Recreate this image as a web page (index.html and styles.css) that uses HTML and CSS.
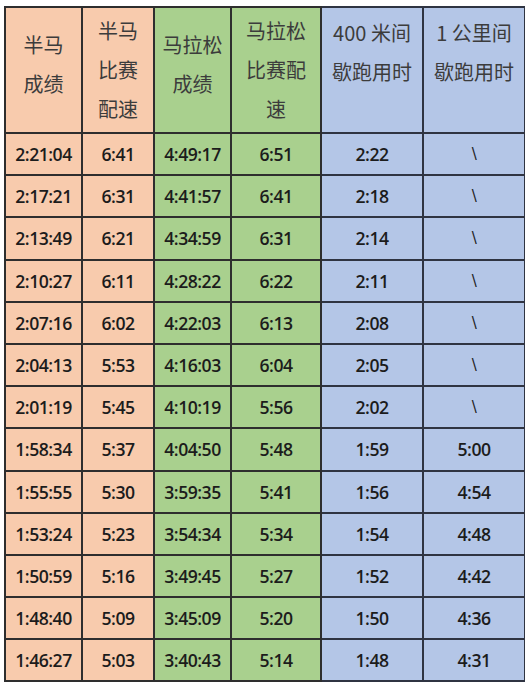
FILE: index.html
```html
<!DOCTYPE html>
<html lang="zh">
<head>
<meta charset="utf-8">
<link rel="stylesheet" href="styles.css">
</head>
<body>
<div class="page">
<table class="pace">
<colgroup>
<col class="c1"><col class="c2"><col class="c3"><col class="c4"><col class="c5"><col class="c6">
</colgroup>
<thead>
<tr class="head">
<th class="o h-mid">半马<br>成绩</th>
<th class="o h-top">半马<br>比赛<br>配速</th>
<th class="g h-mid">马拉松<br>成绩</th>
<th class="g h-top">马拉松<br>比赛配<br>速</th>
<th class="b h-two">400 米间<br>歇跑用时</th>
<th class="b h-two">1 公里间<br>歇跑用时</th>
</tr>
</thead>
<tbody>
<tr><td class="o">2:21:04</td><td class="o">6:41</td><td class="g">4:49:17</td><td class="g">6:51</td><td class="b">2:22</td><td class="b slash">\</td></tr>
<tr><td class="o">2:17:21</td><td class="o">6:31</td><td class="g">4:41:57</td><td class="g">6:41</td><td class="b">2:18</td><td class="b slash">\</td></tr>
<tr><td class="o">2:13:49</td><td class="o">6:21</td><td class="g">4:34:59</td><td class="g">6:31</td><td class="b">2:14</td><td class="b slash">\</td></tr>
<tr><td class="o">2:10:27</td><td class="o">6:11</td><td class="g">4:28:22</td><td class="g">6:22</td><td class="b">2:11</td><td class="b slash">\</td></tr>
<tr><td class="o">2:07:16</td><td class="o">6:02</td><td class="g">4:22:03</td><td class="g">6:13</td><td class="b">2:08</td><td class="b slash">\</td></tr>
<tr><td class="o">2:04:13</td><td class="o">5:53</td><td class="g">4:16:03</td><td class="g">6:04</td><td class="b">2:05</td><td class="b slash">\</td></tr>
<tr><td class="o">2:01:19</td><td class="o">5:45</td><td class="g">4:10:19</td><td class="g">5:56</td><td class="b">2:02</td><td class="b slash">\</td></tr>
<tr><td class="o">1:58:34</td><td class="o">5:37</td><td class="g">4:04:50</td><td class="g">5:48</td><td class="b">1:59</td><td class="b">5:00</td></tr>
<tr><td class="o">1:55:55</td><td class="o">5:30</td><td class="g">3:59:35</td><td class="g">5:41</td><td class="b">1:56</td><td class="b">4:54</td></tr>
<tr><td class="o">1:53:24</td><td class="o">5:23</td><td class="g">3:54:34</td><td class="g">5:34</td><td class="b">1:54</td><td class="b">4:48</td></tr>
<tr><td class="o">1:50:59</td><td class="o">5:16</td><td class="g">3:49:45</td><td class="g">5:27</td><td class="b">1:52</td><td class="b">4:42</td></tr>
<tr><td class="o">1:48:40</td><td class="o">5:09</td><td class="g">3:45:09</td><td class="g">5:20</td><td class="b">1:50</td><td class="b">4:36</td></tr>
<tr><td class="o">1:46:27</td><td class="o">5:03</td><td class="g">3:40:43</td><td class="g">5:14</td><td class="b">1:48</td><td class="b">4:31</td></tr>
</tbody>
</table>
</div>
</body>
</html>
```
FILE: styles.css
```css
html, body {
  margin: 0;
  padding: 0;
  background: #ffffff;
}

.page {
  padding: 6px 0 0 4px;
}

.pace {
  border-collapse: collapse;
  table-layout: fixed;
  width: 520px;
}

.c1 { width: 77px; }
.c2 { width: 72px; }
.c3 { width: 77px; }
.c4 { width: 90px; }
.c5 { width: 102px; }
.c6 { width: 102px; }

.pace th,
.pace td {
  border: 2px solid #2e2e2e;
  text-align: center;
  padding: 0;
}

.pace tr.head {
  height: 126px;
}

.pace tbody tr {
  height: 42.2px;
}

.pace th {
  vertical-align: top;
  font-family: "Noto Sans CJK SC", "Noto Sans", sans-serif;
  font-weight: 400;
  font-size: 20px;
  line-height: 39px;
  color: #3c3c3c;
}

.pace th.h-top { padding-top: 3px; }
.pace th.h-mid { padding-top: 17px; }
.pace th.h-two { padding-top: 5px; }

.pace td {
  vertical-align: middle;
  font-family: "Open Sans", "Noto Sans", sans-serif;
  font-weight: 600;
  font-size: 17.6px;
  letter-spacing: -0.5px;
  color: #1c1c1c;
}

.pace td.slash {
  font-family: "DejaVu Sans", sans-serif;
  font-weight: 400;
  font-size: 15px;
  color: #222;
}

.o { background: #f8cbad; }
.g { background: #a9d08e; }
.b { background: #b4c6e7; }
.pace .b { border-color: #2f3442; }
```
